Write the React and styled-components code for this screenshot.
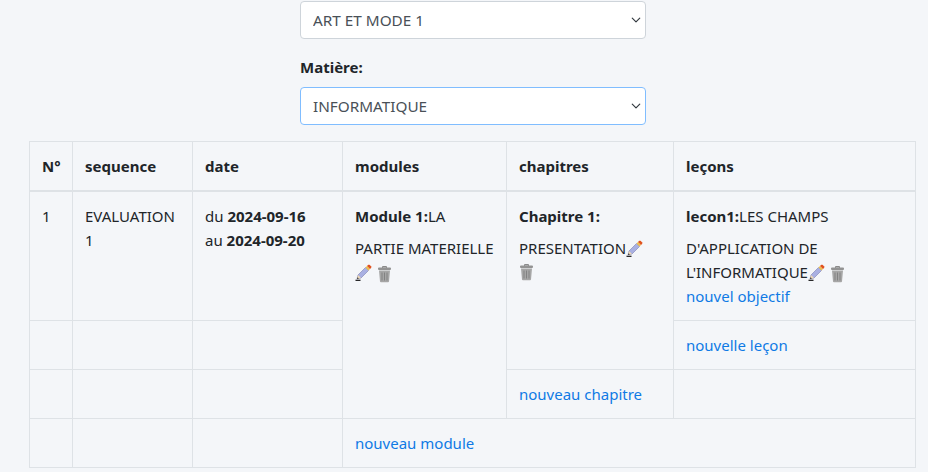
import React from "react";
import styled, { createGlobalStyle } from "styled-components";

const GlobalStyle = createGlobalStyle`
  html, body {
    margin: 0;
    background-color: #f4f6f9;
    color: #212529;
    font-family: "Noto Sans", "Open Sans", sans-serif;
    font-size: 15px;
    line-height: 24px;
    overflow: hidden;
  }
`;

const Page = styled.div`
  display: flex;
  flex-direction: column;
  height: 472px;
  padding: 1px 13px 0 29px;
  box-sizing: border-box;
`;

const FormColumn = styled.div`
  width: 346px;
  margin-left: 271px;
  display: flex;
  flex-direction: column;
`;

const Label = styled.label`
  font-weight: 700;
  margin: 16px 0 8px;
`;

const Select = styled.select`
  appearance: none;
  width: 100%;
  height: 38px;
  padding: 0 28px 0 12px;
  box-sizing: border-box;
  border: 1px solid ${(p) => (p.$focused ? "#80bdff" : "#ced4da")};
  border-radius: 4px;
  color: #495057;
  font: inherit;
  font-size: 15.3px;
  background: #fff
    url("data:image/svg+xml,%3csvg xmlns='http://www.w3.org/2000/svg' viewBox='0 0 16 16'%3e%3cpath fill='none' stroke='%23343a40' stroke-linecap='round' stroke-linejoin='round' stroke-width='1.9' d='M2 5l6 6 6-6'/%3e%3c/svg%3e")
    no-repeat right 4px center / 10px 10px;
`;

const Table = styled.table`
  width: 886px;
  margin-top: 16px;
  border-collapse: collapse;
  table-layout: fixed;
`;

const Col = styled.col`
  width: ${(p) => p.$w}px;
`;

const Th = styled.th`
  height: 49px;
  padding: 12px;
  box-sizing: border-box;
  border: 1px solid #dee2e6;
  border-bottom-width: 2px;
  text-align: left;
  vertical-align: middle;
  font-weight: 700;
`;

const Td = styled.td`
  height: ${(p) => p.$h || 49}px;
  padding: 12px;
  box-sizing: border-box;
  border: 1px solid #dee2e6;
  vertical-align: top;
`;

const Title = styled.div`
  margin-bottom: 8px;
`;

const Action = styled.a`
  color: #0f7ae5;
  text-decoration: none;
  cursor: pointer;
`;

const IconGroup = styled.span`
  display: inline-flex;
  align-items: center;
  vertical-align: -3px;
  margin-bottom: -2px;
`;

const Gap = styled.span`
  display: inline-block;
  width: ${(p) => p.$w}px;
`;

const TrashSvg = styled.svg`
  margin-top: 2px;
`;

const Pencil = () => (
  <svg width="17" height="17" viewBox="0 0 17 17">
    <path d="M0.5 16.3h5" stroke="#111" strokeWidth="1.2" />
    <path d="M2 15l1-4 7.500-7.500 3 3L6 14z" fill="#a9b0e2" stroke="#6a6fa6" strokeWidth="0.5" />
    <path d="M2 15l1-4 3 3z" fill="#efd9b4" />
    <path d="M2 15l.5-1.800 1.400 1.300z" fill="#222" />
    <path d="M10.500 3.500l1.500-1.500 3 3-1.500 1.500z" fill="#eec04f" />
    <path d="M12 2l1-1c.6-.5 1.200-.5 1.800 0l1.200 1.200c.5.600.5 1.200 0 1.800l-1 1z" fill="#e0531f" />
  </svg>
);

const Trash = () => (
  <TrashSvg width="15" height="18" viewBox="0 0 15 18">
    <path d="M5.500 1.500h4v1.500h-4z" fill="none" stroke="#8a8a8a" />
    <rect x="1" y="2.500" width="13" height="2.500" rx="1" fill="#939393" />
    <path d="M2 5.500h11l-1 11a1 1 0 0 1-1 .8H4a1 1 0 0 1-1-.8z" fill="#a6a6a6" />
    <path d="M5 7.500v8M7.500 7.500v8M10 7.500v8" stroke="#828282" strokeWidth="1" />
  </TrashSvg>
);

const EmptyCells = () => (
  <>
    <Td />
    <Td />
    <Td />
  </>
);

export default function App() {
  return (
    <Page>
      <GlobalStyle />
      <FormColumn>
        <Select defaultValue="art">
          <option value="art">ART ET MODE 1</option>
        </Select>
        <Label>Matière:</Label>
        <Select $focused defaultValue="info">
          <option value="info">INFORMATIQUE</option>
        </Select>
      </FormColumn>
      <Table>
        <colgroup>
          <Col $w={43} />
          <Col $w={120} />
          <Col $w={150} />
          <Col $w={164} />
          <Col $w={167} />
          <Col $w={242} />
        </colgroup>
        <thead>
          <tr>
            <Th>N°</Th>
            <Th>sequence</Th>
            <Th>date</Th>
            <Th>modules</Th>
            <Th>chapitres</Th>
            <Th>leçons</Th>
          </tr>
        </thead>
        <tbody>
          <tr>
            <Td $h={129}>1</Td>
            <Td $h={129}>EVALUATION 1</Td>
            <Td $h={129}>
              du <b>2024-09-16</b>
              <br />
              au <b>2024-09-20</b>
            </Td>
            <Td rowSpan={3}>
              <Title>
                <b>Module 1:</b>LA
              </Title>
              PARTIE MATERIELLE
              <br />
              <IconGroup>
                <Pencil />
                <Gap $w={5} />
                <Trash />
              </IconGroup>
            </Td>
            <Td rowSpan={2}>
              <Title>
                <b>Chapitre 1:</b>
              </Title>
              PRESENTATION
              <IconGroup>
                <Pencil />
              </IconGroup>{" "}
              <IconGroup>
                <Trash />
              </IconGroup>
            </Td>
            <Td $h={129}>
              <Title>
                <b>lecon1:</b>LES CHAMPS
              </Title>
              D'APPLICATION DE L'INFORMATIQUE
              <IconGroup>
                <Pencil />
                <Gap $w={5} />
                <Trash />
              </IconGroup>
              <br />
              <Action>nouvel objectif</Action>
            </Td>
          </tr>
          <tr>
            <EmptyCells />
            <Td>
              <Action>nouvelle leçon</Action>
            </Td>
          </tr>
          <tr>
            <EmptyCells />
            <Td>
              <Action>nouveau chapitre</Action>
            </Td>
            <Td />
          </tr>
          <tr>
            <EmptyCells />
            <Td colSpan={3}>
              <Action>nouveau module</Action>
            </Td>
          </tr>
        </tbody>
      </Table>
    </Page>
  );
}
